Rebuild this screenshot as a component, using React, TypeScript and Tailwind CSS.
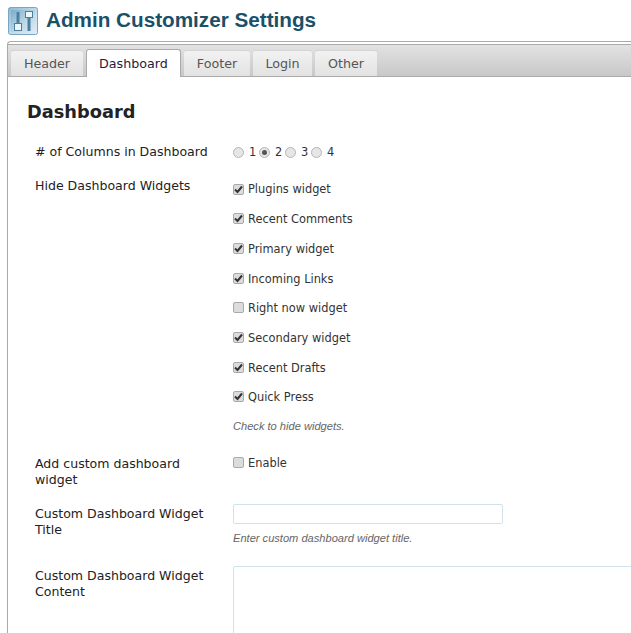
import React from 'react'

const widgets = [
  { label: 'Plugins widget', checked: true },
  { label: 'Recent Comments', checked: true },
  { label: 'Primary widget', checked: true },
  { label: 'Incoming Links', checked: true },
  { label: 'Right now widget', checked: false },
  { label: 'Secondary widget', checked: true },
  { label: 'Recent Drafts', checked: true },
  { label: 'Quick Press', checked: true },
]

const tabs = [
  { name: 'Header', width: 'w-[72px]' },
  { name: 'Dashboard', width: 'w-[95px]' },
  { name: 'Footer', width: 'w-[66px]' },
  { name: 'Login', width: 'w-[59px]' },
  { name: 'Other', width: 'w-[62px]' },
]

const Logo = () => (
  <svg width="30" height="28" viewBox="0 0 30 28" className="shrink-0">
    <defs>
      <linearGradient id="logoBg" x1="0" y1="0" x2="1" y2="1">
        <stop offset="0" stopColor="#6fa3c6" />
        <stop offset="0.55" stopColor="#bcd8e8" />
        <stop offset="1" stopColor="#e4f0f7" />
      </linearGradient>
    </defs>
    <rect x="0.5" y="0.5" width="29" height="27" rx="2" fill="url(#logoBg)" stroke="#7ba6c2" />
    <rect x="2" y="2" width="26" height="24" rx="1" fill="none" stroke="#d9e9f2" strokeOpacity="0.6" />
    <rect x="8.5" y="5" width="3" height="18" fill="#4d7f9f" />
    <rect x="6.5" y="16.5" width="7" height="7" fill="#eef5f9" stroke="#4d7f9f" />
    <rect x="19.5" y="5" width="3" height="19" fill="#4d7f9f" />
    <rect x="17.5" y="4.5" width="7" height="6" fill="#eef5f9" stroke="#4d7f9f" />
  </svg>
)

const CheckBox = ({ checked }: { checked: boolean }) => (
  <span className="w-[11px] h-[11px] shrink-0 -mt-[2px] rounded-[2px] border border-[#a9a9a9] bg-[#dcdcdc] flex items-center justify-center">
    {checked && (
      <svg width="9" height="9" viewBox="0 0 9 9">
        <path d="M1 4.5 L3.5 7 L8 1.5" fill="none" stroke="#333" strokeWidth="2" />
      </svg>
    )}
  </span>
)

const Radio = ({ checked }: { checked: boolean }) => (
  <span className="w-[11px] h-[11px] shrink-0 rounded-full border border-[#b5b5b5] bg-[#e6e6e6] flex items-center justify-center">
    {checked && <span className="w-[5px] h-[5px] rounded-full bg-[#555]" />}
  </span>
)

const Row = ({
  label,
  className,
  labelClass,
  children,
}: {
  label: string
  className?: string
  labelClass?: string
  children: React.ReactNode
}) => (
  <div className={`flex ${className ?? ''}`}>
    <div className={`w-[206px] shrink-0 pl-[8px] pr-[10px] text-[12.55px] leading-4 text-[#222] ${labelClass ?? ''}`}>
      {label}
    </div>
    <div className="flex-1 min-w-0">{children}</div>
  </div>
)

const Hint = ({ children }: { children: React.ReactNode }) => (
  <p className="font-['Liberation_Sans',sans-serif] italic text-[11.1px] leading-4 text-[#666]">{children}</p>
)

export default function App() {
  return (
    <div className="w-[631px] h-[633px] overflow-hidden bg-white font-['DejaVu_Sans',sans-serif]">
      <div className="flex items-center gap-[8px] h-[41px] pl-[8px]">
        <Logo />
        <h1 className="pb-[2px] font-['Liberation_Sans',sans-serif] font-bold text-[20.7px] text-[#1a5068]">
          Admin Customizer Settings
        </h1>
      </div>
      <div className="ml-[7px] w-[640px] h-[592px] rounded-t-[4px] border-l border-t border-[#aaa]">
        <div className="h-[33px] mt-[2px] flex items-end gap-[3px] pl-[3px] border-y border-[#aaa] bg-gradient-to-b from-[#e2e2e2] to-[#c8c8c8]">
          {tabs.map(tab =>
            tab.name === 'Dashboard' ? (
              <div
                key={tab.name}
                className={`${tab.width} h-[28px] -mb-px flex items-center justify-center rounded-t-[3px] border border-b-0 border-[#aaa] bg-white text-[12.7px] text-[#2a1a3a]`}
              >
                {tab.name}
              </div>
            ) : (
              <div
                key={tab.name}
                className={`${tab.width} h-[26px] flex items-center justify-center rounded-t-[3px] border-t border-[#d4d4d4] bg-gradient-to-b from-[#f2f2f2] to-[#e2e2e2] text-[12.7px] text-[#555]`}
              >
                {tab.name}
              </div>
            ),
          )}
        </div>
        <div className="pl-[19px] pt-[23px]">
          <h2 className="text-[17.8px] leading-6 font-bold text-[#222]">Dashboard</h2>
          <Row label="# of Columns in Dashboard" className="mt-[20px]">
            <div className="flex items-center h-4 text-[11.4px] text-[#333]">
              {[1, 2, 3, 4].map(n => (
                <span key={n} className="flex items-center gap-[5px] w-[26px]">
                  <Radio checked={n === 2} />
                  <span className="pt-[2px]">{n}</span>
                </span>
              ))}
            </div>
          </Row>
          <Row label="Hide Dashboard Widgets" className="mt-[18px]">
            <div className="flex flex-col gap-[13.7px] pt-[4px]">
              {widgets.map(w => (
                <label key={w.label} className="flex items-center gap-[4px] h-4 text-[11.4px] text-[#333]">
                  <CheckBox checked={w.checked} />
                  {w.label}
                </label>
              ))}
            </div>
            <div className="mt-[12px]">
              <Hint>Check to hide widgets.</Hint>
            </div>
          </Row>
          <Row label="Add custom dashboard widget" className="mt-[22px]">
            <label className="flex items-center gap-[4px] h-4 text-[11.4px] text-[#333]">
              <CheckBox checked={false} />
              Enable
            </label>
          </Row>
          <Row label="Custom Dashboard Widget Title" className="mt-[16px]" labelClass="pt-[2px]">
            <div className="w-[270px] h-[20px] rounded-[2px] border border-[#cfe2ee] bg-white" />
            <div className="mt-[6px]">
              <Hint>Enter custom dashboard widget title.</Hint>
            </div>
          </Row>
          <Row label="Custom Dashboard Widget Content" className="mt-[20px]" labelClass="pt-[2px]">
            <div className="h-[120px] rounded-[2px] border border-[#cfe2ee] bg-white" />
          </Row>
        </div>
      </div>
    </div>
  )
}
